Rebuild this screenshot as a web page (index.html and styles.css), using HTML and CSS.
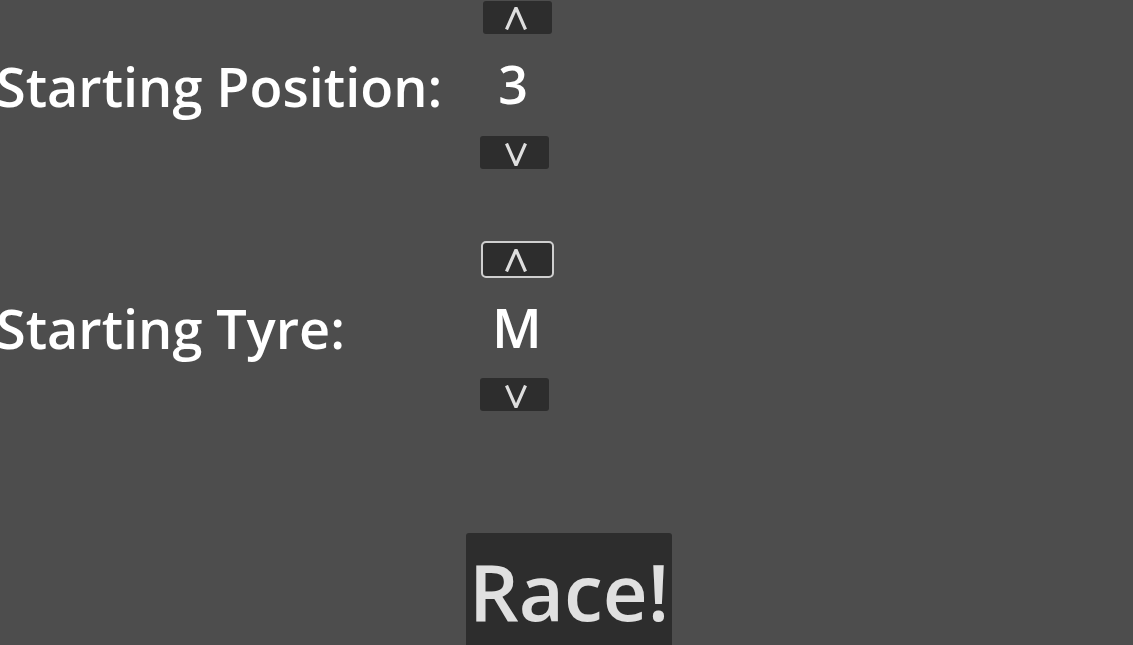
FILE: index.html
```html
<!DOCTYPE html>
<html>
<head>
<meta charset="utf-8">
<link rel="stylesheet" href="styles.css">
</head>
<body>
<main class="setup">
  <section class="row">
    <div class="label">Starting Position:</div>
    <div class="control">
      <button class="step up shift-r" aria-label="up"><svg class="chev" width="22" height="23" viewBox="0 0 22 23"><polyline points="1.5,22.5 11,0.8 20.5,22.5" /></svg></button>
      <div class="value">3</div>
      <button class="step down" aria-label="down"><svg class="chev" width="22" height="23" viewBox="0 0 22 23"><polyline points="1.5,0.5 11,22.2 20.5,0.5" /></svg></button>
    </div>
  </section>
  <section class="row row-second">
    <div class="label">Starting Tyre:</div>
    <div class="control">
      <button class="step up focused" aria-label="up"><svg class="chev" width="22" height="23" viewBox="0 0 22 23"><polyline points="1.5,22.5 11,0.8 20.5,22.5" /></svg></button>
      <div class="value">M</div>
      <button class="step down" aria-label="down"><svg class="chev" width="22" height="23" viewBox="0 0 22 23"><polyline points="1.5,0.5 11,22.2 20.5,0.5" /></svg></button>
    </div>
  </section>
  <div class="actions">
    <button class="race">Race!</button>
  </div>
</main>
</body>
</html>
```

FILE: styles.css
```css
html, body {
  margin: 0;
  padding: 0;
  background: #4d4d4d;
  overflow: hidden;
  height: 100%;
}
body {
  font-family: "Open Sans", "Liberation Sans", sans-serif;
  color: #ffffff;
}
.setup {
  display: flex;
  flex-direction: column;
  padding-top: 1px;
}
.row {
  display: grid;
  grid-template-columns: 480px 72px;
  align-items: center;
}
.row-second {
  margin-top: 74px;
}
.label {
  margin-left: -4px;
  margin-top: 2px;
  font-size: 54px;
  font-weight: 600;
  line-height: 1;
  white-space: nowrap;
}
.control {
  display: flex;
  flex-direction: column;
  align-items: flex-start;
}
.step {
  width: 69px;
  height: 33px;
  margin: 0;
  padding: 0;
  border: none;
  border-radius: 3px;
  background: #2d2d2d;
  color: #dcdcdc;
  display: flex;
  align-items: center;
  justify-content: center;
}
.chev {
  display: block;
  fill: none;
  stroke: #dedede;
  stroke-width: 3.2;
  stroke-linejoin: miter;
  stroke-linecap: butt;
}
.up .chev {
  margin-left: -4px;
  margin-top: 1px;
}
.down .chev {
  margin-left: 2px;
  margin-top: 4px;
}
.shift-r {
  margin-left: 3px;
}
.focused {
  margin-left: 3px;
  outline: 2px solid #cfcfcf;
  outline-offset: 0;
  border-radius: 3px;
}
.value {
  width: 72px;
  height: 102px;
  line-height: 100px;
  font-size: 52px;
  font-weight: 600;
  text-align: center;
  margin-left: -3px;
}
.row-second .value {
  margin-left: 1px;
  line-height: 102px;
  font-size: 54px;
}
.actions {
  margin-top: 122px;
  padding-left: 466px;
}
.race {
  width: 206px;
  height: 120px;
  margin: 0;
  padding: 19px 0 0;
  border: none;
  border-radius: 3px;
  background: #2d2d2d;
  color: #e0e0e0;
  font-family: "Open Sans", "Liberation Sans", sans-serif;
  font-size: 78px;
  font-weight: 600;
  line-height: 1;
  text-align: center;
  display: flex;
  justify-content: center;
}
```
